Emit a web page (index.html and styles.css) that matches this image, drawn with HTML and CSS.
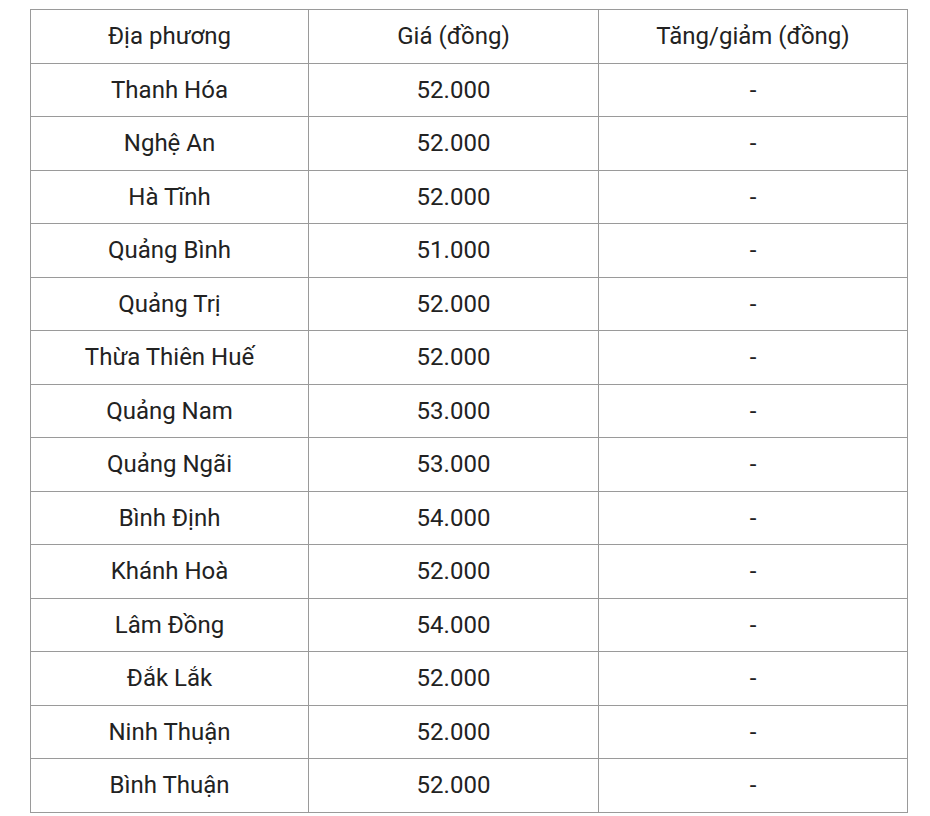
FILE: index.html
```html
<!DOCTYPE html>
<html lang="vi">
<head>
<meta charset="utf-8">
<link rel="stylesheet" href="styles.css">
</head>
<body>
<table class="price-table">
  <colgroup>
    <col class="c1"><col class="c2"><col class="c3">
  </colgroup>
  <tr><td>Địa phương</td><td>Giá (đồng)</td><td>Tăng/giảm (đồng)</td></tr>
  <tr><td>Thanh Hóa</td><td>52.000</td><td>-</td></tr>
  <tr><td>Nghệ An</td><td>52.000</td><td>-</td></tr>
  <tr><td>Hà Tĩnh</td><td>52.000</td><td>-</td></tr>
  <tr><td>Quảng Bình</td><td>51.000</td><td>-</td></tr>
  <tr><td>Quảng Trị</td><td>52.000</td><td>-</td></tr>
  <tr><td>Thừa Thiên Huế</td><td>52.000</td><td>-</td></tr>
  <tr><td>Quảng Nam</td><td>53.000</td><td>-</td></tr>
  <tr><td>Quảng Ngãi</td><td>53.000</td><td>-</td></tr>
  <tr><td>Bình Định</td><td>54.000</td><td>-</td></tr>
  <tr><td>Khánh Hoà</td><td>52.000</td><td>-</td></tr>
  <tr><td>Lâm Đồng</td><td>54.000</td><td>-</td></tr>
  <tr><td>Đắk Lắk</td><td>52.000</td><td>-</td></tr>
  <tr><td>Ninh Thuận</td><td>52.000</td><td>-</td></tr>
  <tr><td>Bình Thuận</td><td>52.000</td><td>-</td></tr>
</table>
</body>
</html>
```
FILE: styles.css
```css
html, body {
  margin: 0;
  padding: 0;
  background: #fff;
}
body {
  padding: 9px 0 0 30px;
  font-family: Roboto, "Noto Sans", sans-serif;
  color: #222;
}
.price-table {
  border-collapse: collapse;
  width: 877px;
  table-layout: fixed;
  font-size: 24px;
}
.c1 { width: 278px; }
.c2 { width: 290px; }
.c3 { width: 309px; }
.price-table tr {
  height: 53.5px;
}
.price-table td {
  border: 1px solid #9a9a9a;
  text-align: center;
  vertical-align: middle;
  padding: 0 8px;
  line-height: 28px;
}
```
